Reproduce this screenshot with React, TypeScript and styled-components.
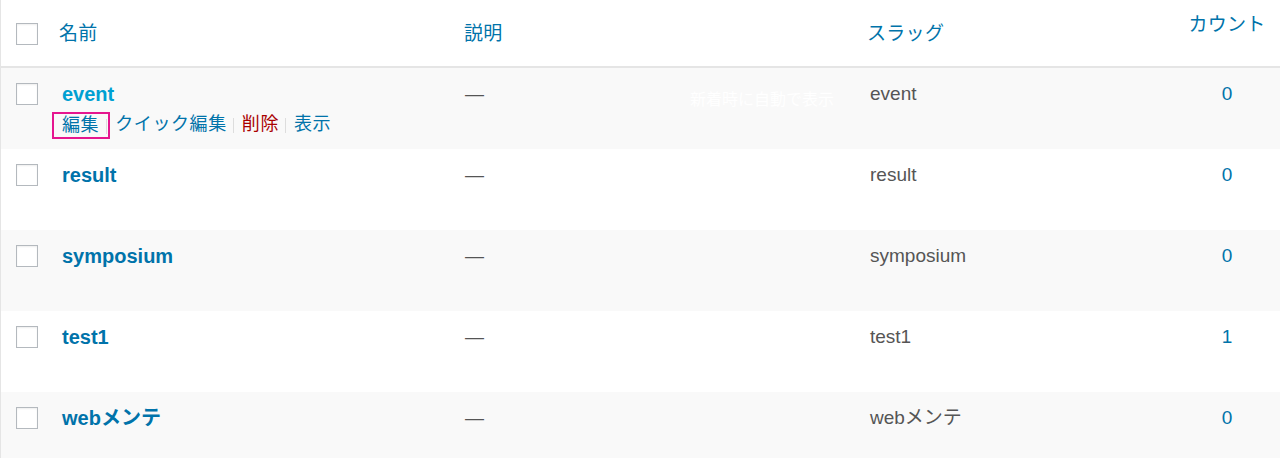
import styled, { createGlobalStyle } from "styled-components";

const GlobalStyle = createGlobalStyle`
  html, body {
    margin: 0;
    padding: 0;
    background: #fff;
  }
  body {
    font-family: "Liberation Sans", "Noto Sans CJK JP", sans-serif;
    -webkit-font-smoothing: antialiased;
  }
`;

const COLUMNS = "49px 403px 405px 316px 1fr";

const Table = styled.div`
  display: flex;
  flex-direction: column;
  width: 1280px;
  height: 458px;
  overflow: hidden;
  box-sizing: border-box;
  border-left: 1px solid #e5e5e5;
  background: #fff;
`;

const HeaderRow = styled.div`
  display: grid;
  grid-template-columns: ${COLUMNS};
  flex-shrink: 0;
  height: 66px;
  border-bottom: 2px solid #e5e5e5;
  box-sizing: content-box;
`;

const Row = styled.div<{ $alt: boolean }>`
  display: grid;
  grid-template-columns: ${COLUMNS};
  height: 81px;
  flex-shrink: 0;
  background: ${(p) => (p.$alt ? "#f9f9f9" : "#fff")};
`;

const CheckCell = styled.div<{ $top: number }>`
  padding: ${(p) => p.$top}px 0 0 15px;
`;

const Checkbox = styled.span`
  display: block;
  width: 22px;
  height: 22px;
  box-sizing: border-box;
  border: 1px solid #b4b9be;
  background: #fff;
  box-shadow: inset 0 1px 2px rgba(0, 0, 0, 0.07);
`;

const HeadCell = styled.div<{ $pad: number; $center?: boolean; $top?: number }>`
  padding: ${(p) => p.$top ?? 21}px 0 0 ${(p) => p.$pad}px;
  font-size: 19px;
  line-height: 26px;
  letter-spacing: 0.3px;
  color: #0073aa;
  text-align: ${(p) => (p.$center ? "center" : "left")};
`;

const Cell = styled.div<{ $center?: boolean }>`
  position: relative;
  padding: 13px 0 0 12px;
  font-size: 19px;
  line-height: 26px;
  color: #555;
  text-align: ${(p) => (p.$center ? "center" : "left")};
`;

const CountCell = styled(Cell)`
  padding-left: 0;
  color: #0073aa;
`;

const NameLink = styled.div<{ $hover?: boolean }>`
  font-size: 20px;
  font-weight: 700;
  line-height: 26px;
  color: ${(p) => (p.$hover ? "#00a0d2" : "#0073aa")};
`;

const RowActions = styled.div<{ $visible: boolean }>`
  display: flex;
  align-items: center;
  margin: 4px 0 0 0;
  height: 26px;
  font-size: 18px;
  line-height: 26px;
  letter-spacing: 0.6px;
  color: #0073aa;
  visibility: ${(p) => (p.$visible ? "visible" : "hidden")};
  white-space: nowrap;
`;

const Action = styled.span<{ $danger?: boolean }>`
  color: ${(p) => (p.$danger ? "#a00" : "#0073aa")};
`;

const Sep = styled.span`
  display: inline-block;
  width: 1px;
  height: 15px;
  margin: 2px 8px 0 6px;
  background: #ddd;
`;

const Highlight = styled.span`
  display: inline-flex;
  align-items: center;
  height: 27px;
  margin: 2px 5px 0 -10px;
  padding: 0 0 0 8px;
  box-sizing: border-box;
  border: 2px solid #e5168f;
  & > ${Sep} {
    margin: 2px 1px 0 7px;
  }
`;

const HiddenNote = styled.span`
  position: absolute;
  left: 237px;
  top: 22px;
  font-size: 16px;
  line-height: 20px;
  color: #fff;
  white-space: nowrap;
`;

type Term = { name: string; slug: string; count: number };

const terms: Term[] = [
  { name: "event", slug: "event", count: 0 },
  { name: "result", slug: "result", count: 0 },
  { name: "symposium", slug: "symposium", count: 0 },
  { name: "test1", slug: "test1", count: 1 },
  { name: "webメンテ", slug: "webメンテ", count: 0 },
];

const App = () => {
  return (
    <>
      <GlobalStyle />
      <Table>
        <HeaderRow>
          <CheckCell $top={23}>
            <Checkbox />
          </CheckCell>
          <HeadCell $pad={9}>名前</HeadCell>
          <HeadCell $pad={11}>説明</HeadCell>
          <HeadCell $pad={9}>スラッグ</HeadCell>
          <HeadCell $pad={0} $top={12} $center>
            カウント
          </HeadCell>
        </HeaderRow>
        {terms.map((t, i) => (
          <Row key={t.name} $alt={i % 2 === 0}>
            <CheckCell $top={15}>
              <Checkbox />
            </CheckCell>
            <Cell>
              <NameLink $hover={i === 0}>{t.name}</NameLink>
              <RowActions $visible={i === 0}>
                <Highlight>
                  <Action>編集</Action>
                  <Sep />
                </Highlight>
                <Action>クイック編集</Action>
                <Sep />
                <Action $danger>削除</Action>
                <Sep />
                <Action>表示</Action>
              </RowActions>
            </Cell>
            <Cell>
              —
              {i === 0 && <HiddenNote>新着時に自動で表示</HiddenNote>}
            </Cell>
            <Cell>{t.slug}</Cell>
            <CountCell $center>{t.count}</CountCell>
          </Row>
        ))}
      </Table>
    </>
  );
};

export default App;
